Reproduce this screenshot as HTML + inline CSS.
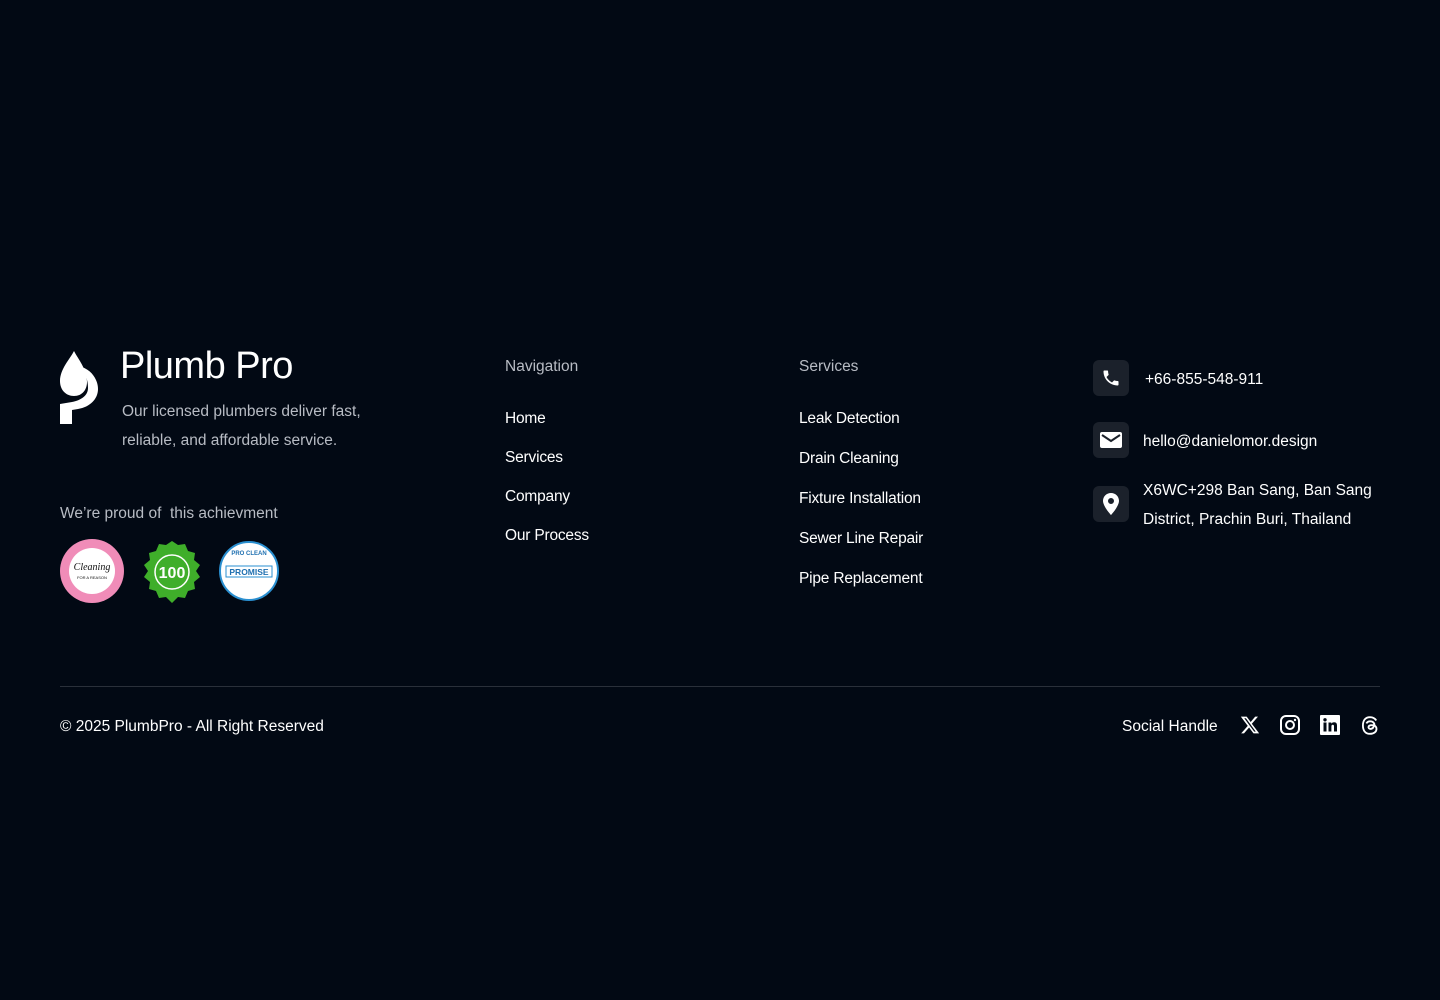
<!DOCTYPE html>
<html><head><meta charset="utf-8"><style>
*{margin:0;padding:0;box-sizing:border-box}
body{width:1440px;height:1000px;background:#020914;font-family:"Liberation Sans",sans-serif;color:#fff;position:relative;overflow:hidden}
.a{position:absolute;white-space:nowrap}
.g{color:#b8bcc4}
.nav{font-size:15.5px;letter-spacing:-0.2px}
.ib{position:absolute;left:1093px;width:36px;height:36px;border-radius:6px;background:#1b212b;display:flex;align-items:center;justify-content:center}
.ct{font-size:15.5px}
</style></head><body>
<svg class="a" style="left:60px;top:351px" width="38" height="73" viewBox="0 0 38 73">
<path d="M14 0 C10 8 0 18 0 30 C0 39 6 45 14 45 C22 45 27 39 27 31 C27 18 18 8 14 0Z" fill="#fff"/>
<path d="M22 16 C33 20 38 30 38 38 C38 48 30 56 18 58 L12 59 L12 73 L0 73 L0 53 L12 51 C22 49 28 44 28 37 C28 30 26 24 22 16Z" fill="#fff"/>
</svg>
<div class="a" style="left:120px;top:345px;font-size:38px;letter-spacing:-0.5px">Plumb Pro</div>
<div class="a g" style="left:122px;top:397px;font-size:15.5px;line-height:29px">Our licensed plumbers deliver fast,<br>reliable, and affordable service.</div>
<div class="a g" style="left:60px;top:505px;font-size:15.5px">We’re proud of&nbsp; this achievment</div>
<svg class="a" style="left:60px;top:539px" width="220" height="66" viewBox="0 0 220 66">
<circle cx="32" cy="32" r="32" fill="#f08cb8"/><circle cx="32" cy="32" r="23" fill="#fff"/>
<text x="32" y="31" font-size="10" font-family="Liberation Serif" font-style="italic" text-anchor="middle" fill="#111">Cleaning</text>
<text x="32" y="40" font-size="4" text-anchor="middle" fill="#111">FOR A REASON</text>
<polygon points="112,0 118,4 125,3 128,10 135,12 134,19 140,24 136,30 140,36 134,41 135,48 128,50 125,57 118,56 112,62 106,56 99,57 96,50 89,48 90,41 84,36 88,30 84,24 90,19 89,12 96,10 99,3 106,4" fill="#3fae2a" transform="translate(0,2)"/>
<circle cx="112" cy="33" r="17" fill="none" stroke="#fff" stroke-width="1.5"/>
<text x="112" y="39" font-size="16" font-weight="bold" text-anchor="middle" fill="#fff">100</text>
<circle cx="189" cy="32" r="29" fill="#fff" stroke="#2a8fd0" stroke-width="2"/>
<rect x="166" y="27" width="46" height="11" fill="#fff" stroke="#2a8fd0"/>
<text x="189" y="36" font-size="8.5" font-weight="bold" text-anchor="middle" fill="#1e6fb0">PROMISE</text>
<text x="189" y="16" font-size="6" font-weight="bold" text-anchor="middle" fill="#1e6fb0">PRO CLEAN</text>
</svg>
<div class="a g" style="left:505px;top:358px;font-size:15.5px">Navigation</div>
<div class="a nav" style="left:505px;top:410px">Home</div>
<div class="a nav" style="left:505px;top:449px">Services</div>
<div class="a nav" style="left:505px;top:488px">Company</div>
<div class="a nav" style="left:505px;top:527px">Our Process</div>
<div class="a g" style="left:799px;top:358px;font-size:15.5px">Services</div>
<div class="a nav" style="left:799px;top:410px">Leak Detection</div>
<div class="a nav" style="left:799px;top:450px">Drain Cleaning</div>
<div class="a nav" style="left:799px;top:490px">Fixture Installation</div>
<div class="a nav" style="left:799px;top:530px">Sewer Line Repair</div>
<div class="a nav" style="left:799px;top:570px">Pipe Replacement</div>
<div class="ib" style="top:360px"><svg width="20" height="20" viewBox="0 0 24 24"><path fill="#fff" d="M6.6 10.8c1.4 2.8 3.8 5.1 6.6 6.6l2.2-2.2c.3-.3.7-.4 1-.2 1.1.4 2.3.6 3.6.6.6 0 1 .4 1 1V20c0 .6-.4 1-1 1C10.6 21 3 13.4 3 4c0-.6.4-1 1-1h3.5c.6 0 1 .4 1 1 0 1.3.2 2.5.6 3.6.1.3 0 .7-.2 1z"/></svg></div>
<div class="a ct" style="left:1145px;top:371px">+66-855-548-911</div>
<div class="ib" style="top:422px"><svg width="22" height="18" viewBox="0 0 22 18"><rect x="0" y="1" width="22" height="16" rx="2" fill="#fff"/><path d="M2 4l9 6 9-6" stroke="#1b212b" stroke-width="2" fill="none"/></svg></div>
<div class="a ct" style="left:1143px;top:433px">hello@danielomor.design</div>
<div class="ib" style="top:486px"><svg width="16" height="22" viewBox="0 0 16 22"><path fill="#fff" d="M8 0C3.6 0 0 3.4 0 7.8 0 13.5 8 22 8 22s8-8.5 8-14.2C16 3.4 12.4 0 8 0zm0 11a3 3 0 110-6 3 3 0 010 6z"/></svg></div>
<div class="a ct" style="left:1143px;top:476px;line-height:29px">X6WC+298 Ban Sang, Ban Sang<br>District, Prachin Buri, Thailand</div>
<div class="a" style="left:60px;top:686px;width:1320px;height:1px;background:#2a303a"></div>
<div class="a" style="left:60px;top:718px;font-size:15.5px">© 2025 PlumbPro - All Right Reserved</div>
<div class="a" style="left:1122px;top:718px;font-size:15.5px">Social Handle</div>
<svg class="a" style="left:1240px;top:715px" width="20" height="20" viewBox="0 0 24 24"><path fill="#fff" d="M18.2 2h3.4l-7.4 8.5L23 22h-6.8l-5.3-7-6.1 7H1.4l7.9-9L1 2h7l4.8 6.4zM17 20h1.9L7.1 3.9H5.1z"/></svg>
<svg class="a" style="left:1280px;top:715px" width="20" height="20" viewBox="0 0 20 20"><rect x="1" y="1" width="18" height="18" rx="5" fill="none" stroke="#fff" stroke-width="2"/><circle cx="10" cy="10" r="4" fill="none" stroke="#fff" stroke-width="2"/><circle cx="15" cy="5" r="1.2" fill="#fff"/></svg>
<svg class="a" style="left:1320px;top:715px" width="20" height="20" viewBox="0 0 20 20"><rect width="20" height="20" rx="1" fill="#fff"/><rect x="3.5" y="7.5" width="3" height="9" fill="#020914"/><circle cx="5" cy="4.8" r="1.7" fill="#020914"/><path d="M8.5 7.5h2.8v1.3c.5-.9 1.6-1.5 2.9-1.5 2.3 0 2.8 1.5 2.8 3.5v5.7h-3v-5c0-1-.2-1.7-1.2-1.7s-1.4.7-1.4 1.7v5h-2.9z" fill="#020914"/></svg>
<svg class="a" style="left:1360px;top:715px" width="20" height="21" viewBox="0 0 24 24"><path fill="none" stroke="#fff" stroke-width="2.2" d="M17.5 11.3c-.6-3-2.7-4.3-5.3-4.3-2.1 0-3.7 1-4.5 2.5M17 12c-2-.6-5.8-.8-6.7 1.3-.6 1.5.6 2.8 2.2 2.8 3 0 4.7-2.6 4.5-6.3M19.5 6C18 3.5 15.5 2 12 2 6.3 2 3.5 6 3.5 12s2.8 10 8.5 10c4.5 0 7.8-2.4 7.8-5.8 0-2.5-1.3-3.7-2.8-4.2"/></svg>
</body></html>
